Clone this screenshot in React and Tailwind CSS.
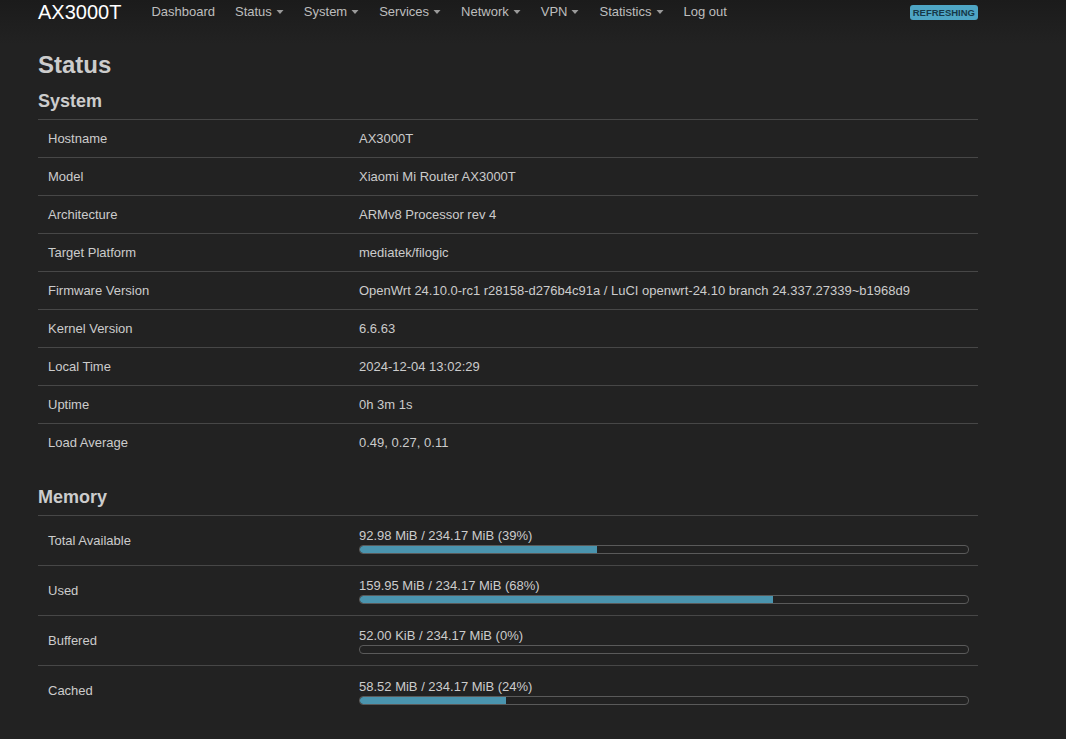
import React from "react";

const font = { fontFamily: '"Liberation Sans", Arial, sans-serif' };

function Caret() {
  return (
    <svg width="8" height="5" viewBox="0 0 8 5" className="ml-[4px] mt-[1px]">
      <path d="M0.5 0 L7.5 0 L4 4 Z" fill="#9a9a9a" />
    </svg>
  );
}

const nav = [
  ["Dashboard", false],
  ["Status", true],
  ["System", true],
  ["Services", true],
  ["Network", true],
  ["VPN", true],
  ["Statistics", true],
  ["Log out", false],
];

const sys = [
  ["Hostname", "AX3000T"],
  ["Model", "Xiaomi Mi Router AX3000T"],
  ["Architecture", "ARMv8 Processor rev 4"],
  ["Target Platform", "mediatek/filogic"],
  ["Firmware Version", "OpenWrt 24.10.0-rc1 r28158-d276b4c91a / LuCI openwrt-24.10 branch 24.337.27339~b1968d9"],
  ["Kernel Version", "6.6.63"],
  ["Local Time", "2024-12-04 13:02:29"],
  ["Uptime", "0h 3m 1s"],
  ["Load Average", "0.49, 0.27, 0.11"],
];

const mem = [
  ["Total Available", "92.98 MiB / 234.17 MiB (39%)", 39],
  ["Used", "159.95 MiB / 234.17 MiB (68%)", 68],
  ["Buffered", "52.00 KiB / 234.17 MiB (0%)", 0],
  ["Cached", "58.52 MiB / 234.17 MiB (24%)", 24],
];

export default function App() {
  return (
    <div className="min-h-[739px] w-full bg-[#222222] text-[#cccccc]" style={font}>
      <div className="h-[44px] w-full bg-[linear-gradient(to_bottom,#1b1b1b,#222222)]">
        <div className="ml-[38px] flex w-[940px] items-start pt-[1px]">
          <div className="h-[22px] text-[20px] leading-[22px] text-white">AX3000T</div>
          <div className="ml-[20px] flex items-center">
            {nav.map(([n, c]) => (
              <div key={n} className="flex h-[22px] items-center px-[10px] text-[13px] text-[#bdbdbd]">
                {n}
                {c && <Caret />}
              </div>
            ))}
          </div>
          <div className="ml-auto mt-[4px] flex h-[15px] items-center rounded-[3px] bg-[#4ea5c4] px-[3px] text-[9.5px] font-bold leading-none text-[#163848]">
            REFRESHING
          </div>
        </div>
      </div>

      <div className="ml-[38px] w-[940px]">
        <h2 className="mt-[8px] text-[24px] font-bold leading-[26px] text-[#cccccc]">Status</h2>
        <h3 className="mt-[12px] text-[18px] font-bold leading-[22px] text-[#cccccc]">System</h3>
        <div className="mt-[7px]">
          {sys.map(([k, v]) => (
            <div key={k} className="flex h-[38px] items-center border-t border-[#474747] text-[13px]">
              <div className="w-[321px] pl-[10px]">{k}</div>
              <div className="flex-1">{v}</div>
            </div>
          ))}
        </div>

        <h3 className="mt-[25px] text-[18px] font-bold leading-[22px] text-[#cccccc]">Memory</h3>
        <div className="mt-[7px]">
          {mem.map(([k, v, p], i) => (
            <div
              key={k}
              className={`flex items-center border-t border-[#474747] text-[13px] ${i === 3 ? "h-[51px]" : "h-[50px]"}`}
            >
              <div className="w-[321px] pl-[10px]">{k}</div>
              <div className="flex-1 pr-[9px] pt-[1px]">
                <div className="leading-[16px]">{v}</div>
                <div className="mt-[1px] h-[9px] w-full overflow-hidden rounded-[4px] border border-[#5a5a5a]">
                  <div className="h-full rounded-l-[3px] bg-[#4a94ae]" style={{ width: `${p}%` }} />
                </div>
              </div>
            </div>
          ))}
        </div>
      </div>
    </div>
  );
}
